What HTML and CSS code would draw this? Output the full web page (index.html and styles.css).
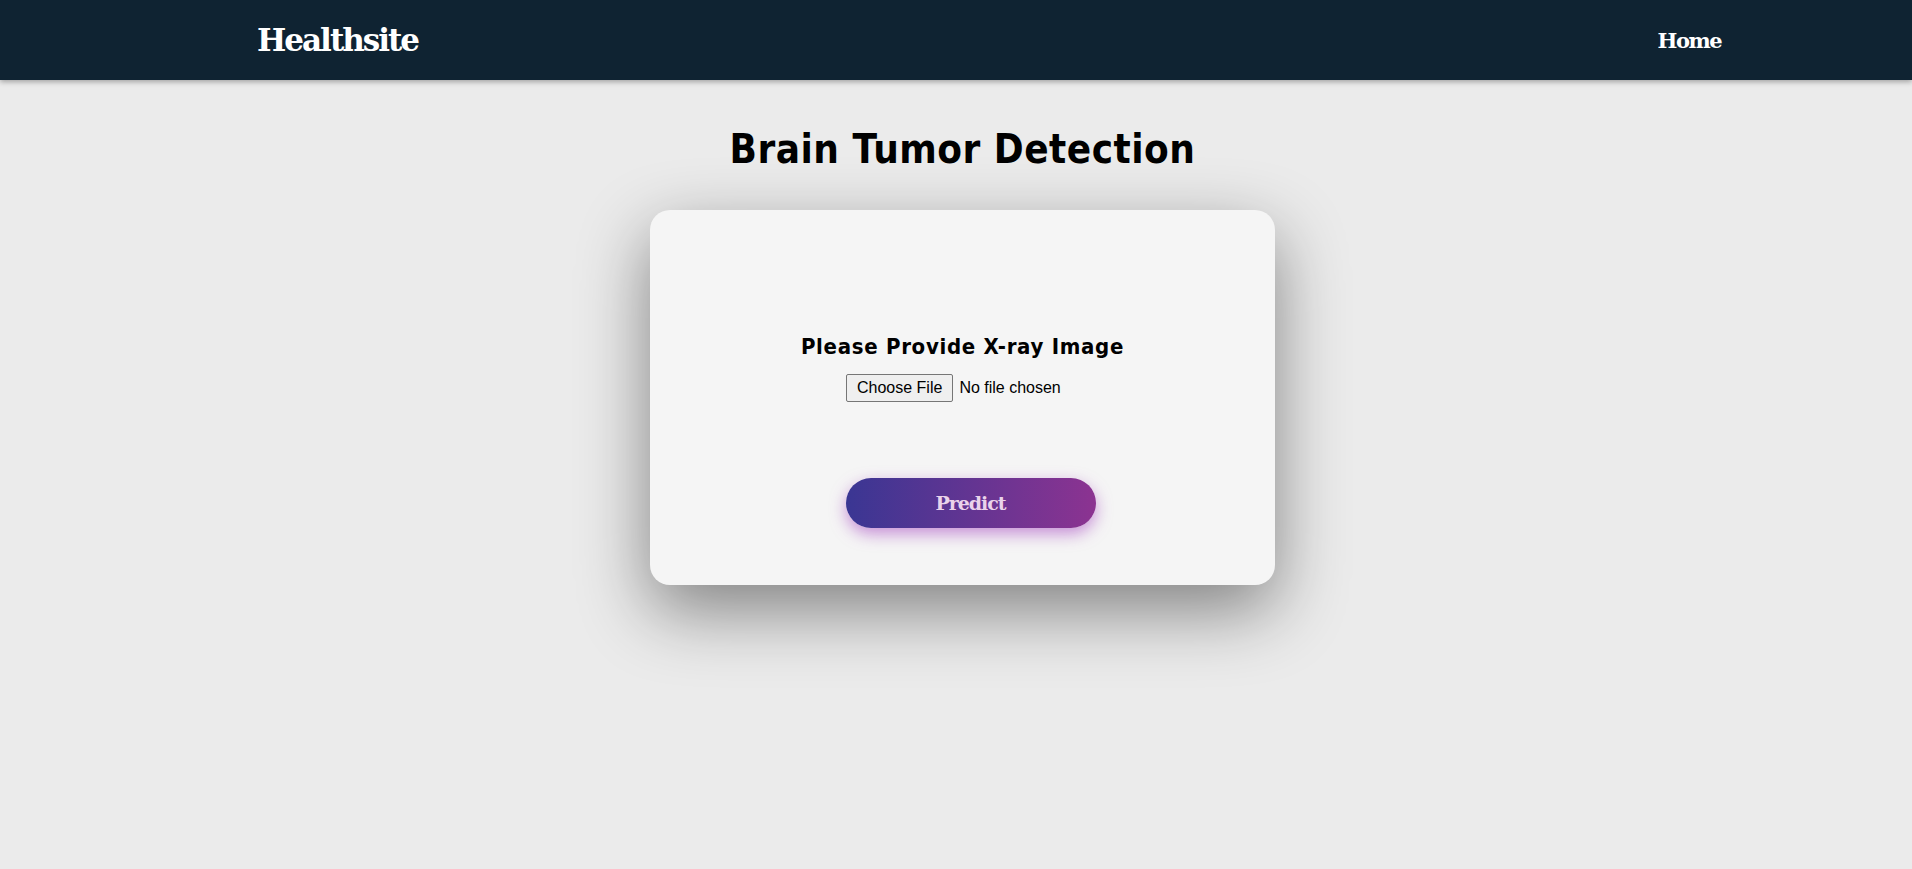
FILE: index.html
```
<!DOCTYPE html>
<html lang="en">
<head>
<meta charset="utf-8">
<title>Healthsite - Brain Tumor Detection</title>
<link rel="stylesheet" href="styles.css">
</head>
<body>
<nav class="navbar">
  <a class="brand" href="#">Healthsite</a>
  <a class="nav-link" href="#">Home</a>
</nav>
<main class="main">
  <h1 class="title">Brain Tumor Detection</h1>
  <form class="card">
    <h2 class="card-title">Please Provide X-ray Image</h2>
    <input class="file-input" type="file" name="file">
    <button class="predict" type="button">Predict</button>
  </form>
</main>
</body>
</html>
```
FILE: styles.css
```
html, body {
  margin: 0;
  padding: 0;
}
body {
  background: #ebebeb;
  min-height: 869px;
  font-family: "DejaVu Sans", sans-serif;
}
.navbar {
  height: 80px;
  background: #0f2332;
  box-shadow: 0 2px 5px rgba(0, 0, 0, 0.3);
  display: flex;
  align-items: center;
  justify-content: space-between;
  padding: 0 191px 0 257px;
  box-sizing: border-box;
}
.brand {
  font-family: "DejaVu Serif", serif;
  font-weight: bold;
  font-size: 31px;
  letter-spacing: -2px;
  color: #ffffff;
  text-decoration: none;
}
.nav-link {
  font-family: "DejaVu Serif", serif;
  font-weight: bold;
  font-size: 21px;
  letter-spacing: -1.5px;
  color: #ffffff;
  text-decoration: none;
}
.main {
  display: flex;
  flex-direction: column;
  align-items: center;
  padding-left: 13px;
}
.title {
  margin: 45px 0 0;
  font-family: "DejaVu Sans", sans-serif;
  font-stretch: condensed;
  font-size: 40px;
  line-height: 48px;
  font-weight: bold;
  color: #000;
  letter-spacing: 0.5px;
}
.card {
  margin-top: 37px;
  width: 625px;
  height: 375px;
  box-sizing: border-box;
  background: #f5f5f5;
  border-radius: 20px;
  box-shadow: 0 25px 70px rgba(0, 0, 0, 0.45);
  display: flex;
  flex-direction: column;
  align-items: center;
  padding-top: 122px;
}
.card-title {
  margin: 0;
  font-family: "DejaVu Sans", sans-serif;
  font-stretch: condensed;
  font-size: 22px;
  line-height: 29px;
  font-weight: bold;
  letter-spacing: 0.7px;
  color: #000;
}
.file-input {
  margin-top: 13px;
  width: 233px;
  font-family: "Liberation Sans", Arial, sans-serif;
  font-size: 16px;
  color: #000;
}
.file-input::file-selector-button {
  font-family: "Liberation Sans", Arial, sans-serif;
  font-size: 16px;
  color: #000;
  background: #efefef;
  border: 1px solid #767676;
  border-radius: 2px;
  padding: 4px 10px;
  margin-right: 6px;
}
.predict {
  margin-top: 76px;
  margin-left: 16px;
  width: 250px;
  height: 50px;
  border: none;
  border-radius: 25px;
  background: linear-gradient(to right, #3a3693, #8c3391);
  box-shadow: 0 6px 16px rgba(160, 60, 190, 0.55);
  color: #ead3ea;
  font-family: "DejaVu Serif", serif;
  font-weight: bold;
  font-size: 19px;
  letter-spacing: -1px;
  cursor: pointer;
}
```
